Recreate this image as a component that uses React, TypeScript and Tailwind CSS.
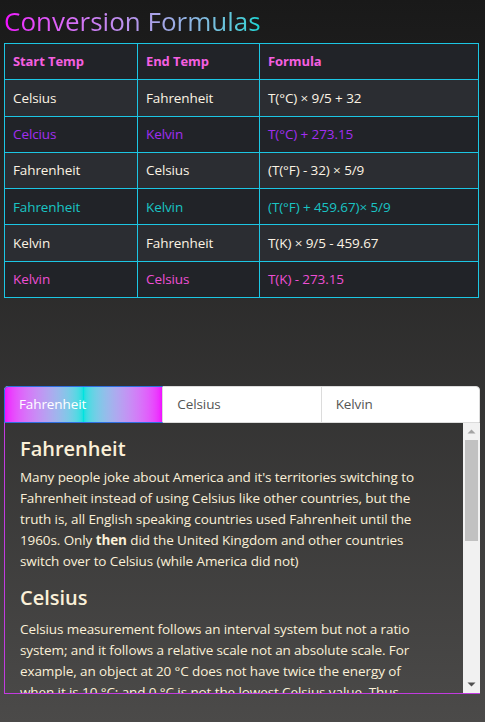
import React from "react";

const rows = [
  { start: "Celsius", end: "Fahrenheit", formula: "T(°C) × 9/5 + 32", tone: "text-[#fbf3e4]", bg: "bg-[#2b2d32]" },
  { start: "Celcius", end: "Kelvin", formula: "T(°C) + 273.15", tone: "text-[#a22ef0]", bg: "bg-[#212328]" },
  { start: "Fahrenheit", end: "Celsius", formula: "(T(°F) - 32) × 5/9", tone: "text-[#fbf3e4]", bg: "bg-[#2b2d32]" },
  { start: "Fahrenheit", end: "Kelvin", formula: "(T(°F) + 459.67)× 5/9", tone: "text-[#19c4c4]", bg: "bg-[#212328]" },
  { start: "Kelvin", end: "Fahrenheit", formula: "T(K) × 9/5 - 459.67", tone: "text-[#fbf3e4]", bg: "bg-[#2b2d32]" },
  { start: "Kelvin", end: "Celsius", formula: "T(K) - 273.15", tone: "text-[#ee4fd4]", bg: "bg-[#212328]" },
];

const tabs = ["Fahrenheit", "Celsius", "Kelvin"];

const cell = "h-[36.3px] border-r border-b border-[#1cc6e4] px-2 text-left";

function Scrollbar() {
  return (
    <div className="flex w-[17px] shrink-0 flex-col items-center bg-[#f1f1f1]">
      <svg width="17" height="17" viewBox="0 0 17 17" className="shrink-0">
        <path d="M4.5 10.5 L8.5 6.5 L12.5 10.5 Z" fill="#a3a3a3" />
      </svg>
      <div className="h-[101px] w-[13px] bg-[#c1c1c1]" />
      <div className="flex-1" />
      <svg width="17" height="17" viewBox="0 0 17 17" className="shrink-0">
        <path d="M4.5 6.5 L12.5 6.5 L8.5 10.5 Z" fill="#505050" />
      </svg>
    </div>
  );
}

export default function App() {
  return (
    <div className="min-h-[722px] bg-gradient-to-b from-[#191919] to-[#4b4a49] pl-1 pr-[6px] pt-[3px] font-['Open_Sans',sans-serif] text-[13.5px] tracking-[-0.1px]">
      <h1 className="w-fit bg-gradient-to-r from-[#f000ff] to-[#00d4d4] bg-clip-text text-[26px] leading-[36px] tracking-normal text-transparent">
        Conversion Formulas
      </h1>

      {/* formula table */}
      <table className="mt-[4px] w-full border-separate border-spacing-0 border-l border-t border-[#1cc6e4]">
        <thead>
          <tr className="bg-[#212328] text-[13px] font-bold text-[#f55fe0]">
            <th className={`${cell} w-[133px]`}>Start Temp</th>
            <th className={`${cell} w-[122px]`}>End Temp</th>
            <th className={cell}>Formula</th>
          </tr>
        </thead>
        <tbody>
          {rows.map((r, i) => (
            <tr key={i} className={`${r.bg} ${r.tone}`}>
              <td className={cell}>{r.start}</td>
              <td className={cell}>{r.end}</td>
              <td className={cell}>{r.formula}</td>
            </tr>
          ))}
        </tbody>
      </table>

      {/* tabs */}
      <div className="mt-[88px] mr-[-1px]">
        <div className="flex h-[37px] rounded-t-[4px] border border-[#dcdcdc] bg-white">
          {tabs.map((t, i) =>
            i === 0 ? (
              <div key={t} className="-m-px flex flex-1 items-center rounded-tl-[4px] border border-[#2f6fe0] bg-gradient-to-r from-[#f00cff] via-[#00e2e0] to-[#f00cff] px-[14px] text-white">
                {t}
              </div>
            ) : (
              <div key={t} className="flex flex-1 items-center border-l border-[#dcdcdc] px-[14px] text-[#555]">
                {t}
              </div>
            )
          )}
        </div>
        <div className="flex h-[271px] border-b border-l border-[#c23be0]">
          <div className="flex-1 overflow-hidden pl-[15px] pr-[30px] pt-[12px] leading-[21px] text-[#fbf0d8]">
            <h2 className="text-[20px] font-semibold leading-[28px] tracking-normal">Fahrenheit</h2>
            <p className="mt-[4px]">
              Many people joke about America and it's territories switching to Fahrenheit instead of using Celsius like other countries, but the truth is, all English speaking countries used Fahrenheit until the 1960s. Only <b>then</b> did the United Kingdom and other countries switch over to Celsius (while America did not)
            </p>
            <h2 className="mt-[12px] text-[20px] font-semibold leading-[28px] tracking-normal">Celsius</h2>
            <p className="mt-[7px]">
              Celsius measurement follows an interval system but not a ratio system; and it follows a relative scale not an absolute scale. For example, an object at 20 °C does not have twice the energy of when it is 10 °C; and 0 °C is not the lowest Celsius value. Thus, degrees Celsius is a useful interval measurement but does not possess the characteristics of ratio measures like weight or distance.
            </p>
          </div>
          <Scrollbar />
        </div>
      </div>
    </div>
  );
}
